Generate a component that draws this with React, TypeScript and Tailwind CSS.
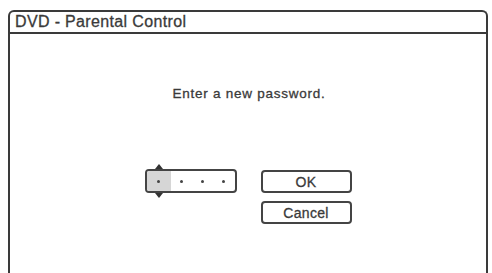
import React from "react";

export default function App() {
  const font = { fontFamily: '"Liberation Sans", Arial, sans-serif' };
  return (
    <div className="w-[492px] h-[273px] bg-white overflow-hidden pt-[10px] pl-[8px] pr-[4px]" style={font}>
      <div className="h-full border-2 border-b-0 border-[#3a3a3a] rounded-t-[6px] flex flex-col">
        <div className="h-[22px] border-b-2 border-[#3a3a3a] flex items-center pl-[5px] text-[16px] tracking-[0.35px] text-[#3a3a3a] leading-none [-webkit-text-stroke:0.3px_#3a3a3a]">
          DVD - Parental Control
        </div>
        <div className="flex flex-col items-center">
          <div className="mt-[52px] text-[13.5px] leading-[16px] tracking-[0.75px] text-[#3a3a3a] pl-[2px] [-webkit-text-stroke:0.3px_#3a3a3a]">
            Enter a new password.
          </div>
          <div className="mt-[67px] flex flex-row items-start gap-[24px]">
            <div className="relative w-[92px] h-[24px] border-2 border-[#444] rounded-[4px] flex flex-row overflow-visible">
              <div className="w-[24px] h-full bg-[#d6d6d6] rounded-l-[2px] flex items-center justify-center">
                <div className="w-[3px] h-[3px] rounded-full bg-[#444]" />
              </div>
              <div className="flex-1 flex items-center justify-center">
                <div className="w-[3px] h-[3px] rounded-full bg-[#444]" />
              </div>
              <div className="flex-1 flex items-center justify-center">
                <div className="w-[3px] h-[3px] rounded-full bg-[#444]" />
              </div>
              <div className="flex-1 flex items-center justify-center">
                <div className="w-[3px] h-[3px] rounded-full bg-[#444]" />
              </div>
              <div className="absolute left-[8px] top-[-7px] w-0 h-0 border-l-[4px] border-r-[4px] border-b-[5px] border-l-transparent border-r-transparent border-b-[#333]" />
              <div className="absolute left-[8px] bottom-[-7px] w-0 h-0 border-l-[4px] border-r-[4px] border-t-[5px] border-l-transparent border-r-transparent border-t-[#333]" />
            </div>
            <div className="flex flex-col gap-[8px] pt-[1px]">
              <div className="w-[91px] h-[23px] border-2 border-[#444] rounded-[4px] flex items-center justify-center text-[14px] tracking-[0.3px] text-[#3a3a3a] leading-none [-webkit-text-stroke:0.3px_#3a3a3a]">
                OK
              </div>
              <div className="w-[91px] h-[23px] border-2 border-[#444] rounded-[4px] flex items-center justify-center text-[14px] tracking-[0.3px] text-[#3a3a3a] leading-none [-webkit-text-stroke:0.3px_#3a3a3a]">
                Cancel
              </div>
            </div>
          </div>
        </div>
      </div>
    </div>
  );
}
